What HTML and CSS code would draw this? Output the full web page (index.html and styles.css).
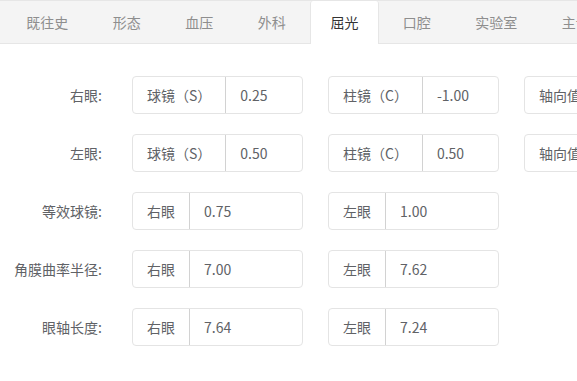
FILE: index.html
```html
<!DOCTYPE html>
<html lang="zh-CN">
<head>
    <meta charset="UTF-8">
    <meta name="viewport" content="width=device-width, initial-scale=1.0">
    <title>屈光</title>
    <link rel="stylesheet" href="styles.css">
</head>
<body>
    <div class="page">
        <div class="tabs">
            <div class="tab wide">既往史</div>
            <div class="tab">形态</div>
            <div class="tab">血压</div>
            <div class="tab">外科</div>
            <div class="tab active">屈光</div>
            <div class="tab">口腔</div>
            <div class="tab wide">实验室</div>
            <div class="tab">主诉</div>
        </div>

        <div class="form">
            <div class="row">
                <label class="label">右眼:</label>
                <div class="group"><span class="prepend">球镜（S）</span><span class="value">0.25</span></div>
                <div class="group"><span class="prepend">柱镜（C）</span><span class="value">-1.00</span></div>
                <div class="group"><span class="prepend">轴向值（A）</span><span class="value">90</span></div>
            </div>
            <div class="row">
                <label class="label">左眼:</label>
                <div class="group"><span class="prepend">球镜（S）</span><span class="value">0.50</span></div>
                <div class="group"><span class="prepend">柱镜（C）</span><span class="value">0.50</span></div>
                <div class="group"><span class="prepend">轴向值（A）</span><span class="value">90</span></div>
            </div>
            <div class="row">
                <label class="label">等效球镜:</label>
                <div class="group"><span class="prepend">右眼</span><span class="value">0.75</span></div>
                <div class="group"><span class="prepend">左眼</span><span class="value">1.00</span></div>
            </div>
            <div class="row">
                <label class="label">角膜曲率半径:</label>
                <div class="group"><span class="prepend">右眼</span><span class="value">7.00</span></div>
                <div class="group"><span class="prepend">左眼</span><span class="value">7.62</span></div>
            </div>
            <div class="row">
                <label class="label">眼轴长度:</label>
                <div class="group"><span class="prepend">右眼</span><span class="value">7.64</span></div>
                <div class="group"><span class="prepend">左眼</span><span class="value">7.24</span></div>
            </div>
        </div>
    </div>
</body>
</html>
```

FILE: styles.css
```css
body {
    margin: 0;
    font-family: "Noto Sans CJK SC", "Liberation Sans", sans-serif;
    font-size: 14px;
    color: #606266;
    background-color: white;
}

.page {
    width: 577px;
    height: 381px;
    overflow: hidden;
}

.tabs {
    display: flex;
    height: 42px;
    padding-left: 4px;
    background-color: #f4f4f4;
    border-top: 1px solid #e6e6e6;
    border-bottom: 1px solid #e6e6e6;
    white-space: nowrap;
}

.tab {
    flex: none;
    width: 72.5px;
    box-sizing: border-box;
    text-align: center;
    line-height: 42px;
    color: #8e8e8e;
}

.tab.wide {
    width: 86.5px;
}

.tab.active {
    width: 69px;
    margin: 0 1.5px 0 2px;
    height: 43px;
    background-color: white;
    color: #333;
    border-left: 1px solid #e6e6e6;
    border-right: 1px solid #e6e6e6;
    border-radius: 3px 3px 0 0;
}

.form {
    padding-top: 32px;
}

.row {
    display: flex;
    align-items: center;
    margin-bottom: 20px;
}

.label {
    flex: none;
    width: 102px;
    margin-right: 30px;
    text-align: right;
    white-space: nowrap;
}

.group {
    flex: none;
    display: flex;
    width: 171px;
    height: 38px;
    box-sizing: border-box;
    margin-right: 25px;
    border: 1px solid #e4e4e4;
    border-radius: 4px;
    line-height: 36px;
    white-space: nowrap;
    overflow: hidden;
}

.prepend {
    flex: none;
    padding: 0 14px;
    border-right: 1px solid #d2d2d2;
}

.value {
    padding: 0 14px;
}
```
